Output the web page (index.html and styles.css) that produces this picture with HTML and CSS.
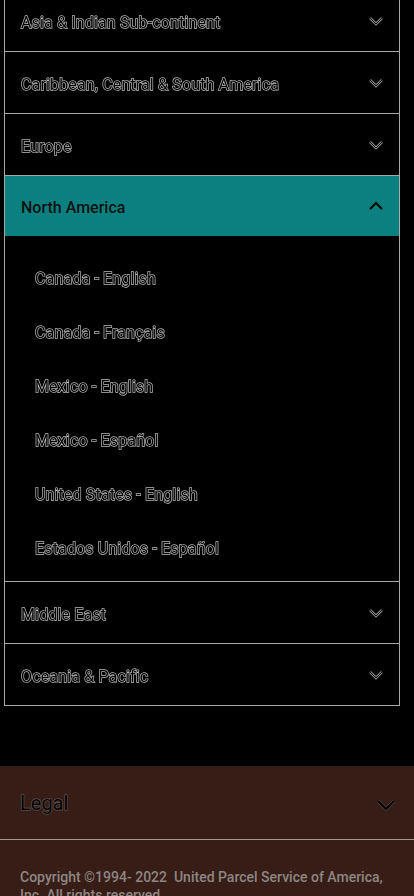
FILE: index.html
```html
<!DOCTYPE html>
<html lang="en">
  <head>
    <meta charset="UTF-8" />
    <meta name="viewport" content="width=device-width, initial-scale=1.0" />
    <title>Locations</title>
    <link rel="stylesheet" href="styles.css">
  </head>
  <body>
    <div class="regions">
      <div class="region">
        <div class="region-head">
          <span class="region-title">Asia &amp; Indian Sub-continent</span>
          <svg class="chev" width="16" height="10" viewBox="0 0 16 10">
            <polyline points="2,2 8,8 14,2" class="chev-out" />
            <polyline points="2,2 8,8 14,2" class="chev-in" />
          </svg>
        </div>
      </div>

      <div class="region">
        <div class="region-head">
          <span class="region-title">Caribbean, Central &amp; South America</span>
          <svg class="chev" width="16" height="10" viewBox="0 0 16 10">
            <polyline points="2,2 8,8 14,2" class="chev-out" />
            <polyline points="2,2 8,8 14,2" class="chev-in" />
          </svg>
        </div>
      </div>

      <div class="region">
        <div class="region-head">
          <span class="region-title">Europe</span>
          <svg class="chev" width="16" height="10" viewBox="0 0 16 10">
            <polyline points="2,2 8,8 14,2" class="chev-out" />
            <polyline points="2,2 8,8 14,2" class="chev-in" />
          </svg>
        </div>
      </div>

      <div class="region open">
        <div class="region-head">
          <span class="region-title">North America</span>
          <svg class="chev" width="16" height="10" viewBox="0 0 16 10">
            <polyline points="2,8 8,2 14,8" class="chev-up" />
          </svg>
        </div>
        <ul class="locales">
          <li>Canada - English</li>
          <li>Canada - Français</li>
          <li>Mexico - English</li>
          <li>Mexico - Español</li>
          <li>United States - English</li>
          <li>Estados Unidos - Español</li>
        </ul>
      </div>

      <div class="region">
        <div class="region-head">
          <span class="region-title">Middle East</span>
          <svg class="chev" width="16" height="10" viewBox="0 0 16 10">
            <polyline points="2,2 8,8 14,2" class="chev-out" />
            <polyline points="2,2 8,8 14,2" class="chev-in" />
          </svg>
        </div>
      </div>

      <div class="region">
        <div class="region-head">
          <span class="region-title">Oceania &amp; Pacific</span>
          <svg class="chev" width="16" height="10" viewBox="0 0 16 10">
            <polyline points="2,2 8,8 14,2" class="chev-out" />
            <polyline points="2,2 8,8 14,2" class="chev-in" />
          </svg>
        </div>
      </div>
    </div>

    <footer class="footer">
      <div class="legal">
        <span class="legal-title">Legal</span>
        <svg class="legal-chev" width="20" height="14" viewBox="0 0 20 14">
          <polyline points="2,3 10,11 18,3" class="legal-out" />
          <polyline points="2,3 10,11 18,3" class="legal-in" />
        </svg>
      </div>
      <p class="copyright">
        Copyright ©1994- 2022&nbsp; United Parcel Service of America, Inc. All rights reserved.
      </p>
    </footer>
  </body>
</html>
```

FILE: styles.css
```css
* {
  box-sizing: border-box;
}

body {
  margin: 0;
  padding: 0;
  background: #000;
  font-family: Roboto, "Noto Sans", sans-serif;
  overflow: hidden;
  height: 896px;
}

.regions {
  margin: -10px 14px 0 4px;
  border: 1px solid #a8a8a8;
  border-top: none;
}

.region {
  border-bottom: 1px solid #a8a8a8;
}

.region:last-child {
  border-bottom: none;
}

.region-head {
  display: flex;
  justify-content: space-between;
  align-items: center;
  height: 61px;
  padding: 3px 15px 0 16px;
}

/* outlined text: stroke drawn first, black fill on top */
.region-title,
.locales li {
  color: #000;
  letter-spacing: 0.15px;
  -webkit-text-stroke: 1.4px #b8b8b8;
  paint-order: stroke fill;
  filter: grayscale(1);
}

.region-title {
  font-size: 16px;
}

.chev {
  display: block;
  margin-top: -3px;
}

.chev-out {
  fill: none;
  stroke: #8a8a8a;
  stroke-width: 2.6;
}

.chev-in {
  fill: none;
  stroke: #000;
  stroke-width: 1;
}

.open .region-head {
  background: #0b8080;
  height: 60px;
}

.open .region-title {
  font-weight: 500;
  letter-spacing: 0;
  -webkit-text-stroke: 0;
  filter: none;
  color: #111;
}

.chev-up {
  fill: none;
  stroke: #000;
  stroke-width: 2;
}

.locales {
  list-style: none;
  margin: 0;
  padding: 16px 0 5px 30px;
}

.locales li {
  height: 54px;
  line-height: 54px;
  font-size: 16px;
}

.footer {
  margin-top: 60px;
  background: #361d16;
}

.legal {
  display: flex;
  justify-content: space-between;
  align-items: center;
  height: 74px;
  padding: 0 18px 0 20px;
  border-bottom: 1px solid #a89890;
}

.legal-title {
  font-size: 20px;
  color: #000;
  -webkit-text-stroke: 1.2px #6a5a54;
  paint-order: stroke fill;
}

.legal-chev {
  display: block;
  margin-top: 4px;
}

.legal-out {
  fill: none;
  stroke: #5a4a44;
  stroke-width: 3.2;
}

.legal-in {
  fill: none;
  stroke: #000;
  stroke-width: 2;
}

.copyright {
  margin: 0;
  padding: 28px 30px 0 20px;
  font-size: 14px;
  font-weight: 500;
  line-height: 18px;
  color: #8e8682;
}
```
